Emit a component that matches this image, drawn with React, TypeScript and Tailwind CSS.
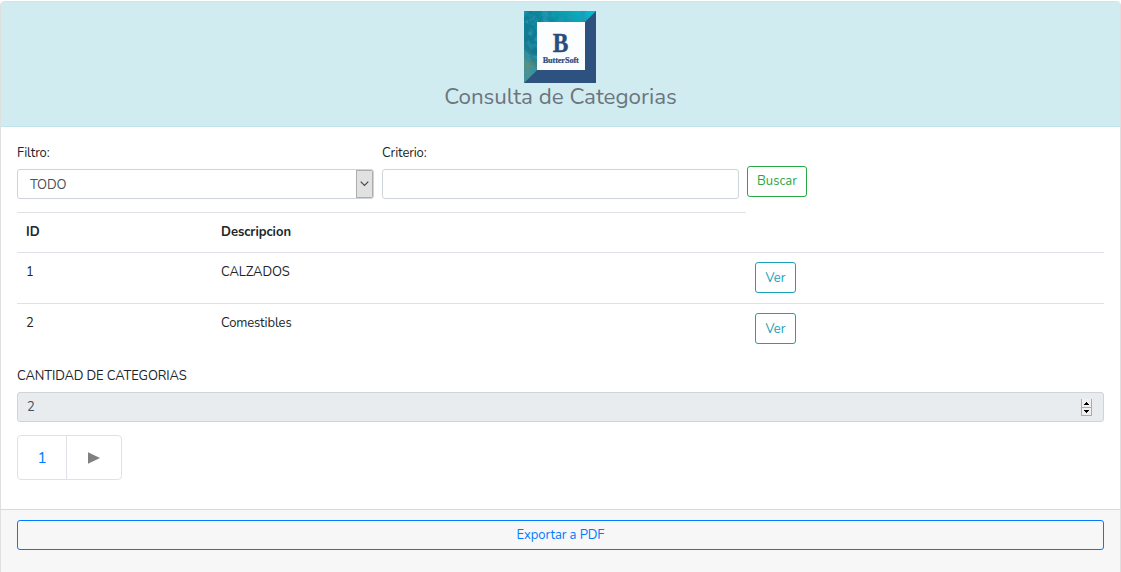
import React from "react";

const categories = [
  { id: 1, name: "CALZADOS" },
  { id: 2, name: "Comestibles" },
];

function Logo() {
  return (
    <svg width="72" height="72" viewBox="0 0 72 72" className="mr-px block">
      <defs>
        <linearGradient id="teal" x1="0" y1="1" x2="1" y2="0">
          <stop offset="0" stopColor="#5f8f83" />
          <stop offset="0.16" stopColor="#5a8f80" />
          <stop offset="0.28" stopColor="#14768c" />
          <stop offset="0.55" stopColor="#0a8298" />
          <stop offset="0.8" stopColor="#06a6b6" />
          <stop offset="1" stopColor="#00c0d6" />
        </linearGradient>
        <filter id="grain" x="0" y="0" width="1" height="1">
          <feTurbulence type="fractalNoise" baseFrequency="0.16" numOctaves="3" seed="4" />
          <feColorMatrix values="0 0 0 0 0.02  0 0 0 0 0.3  0 0 0 0 0.45  2.6 0 0 0 -1.05" />
          <feComposite in2="SourceGraphic" operator="in" />
        </filter>
      </defs>
      <rect width="72" height="72" fill="#2d5280" />
      <path d="M0 0H72L0 72Z" fill="url(#teal)" />
      <path d="M0 0H72L0 72Z" filter="url(#grain)" />
      <rect x="13" y="11" width="48" height="48" fill="#fcfdff" />
      <text x="36.5" y="41" textAnchor="middle" fontFamily="Liberation Serif, serif" fontWeight="700" fontSize="28" textLength="15.5" lengthAdjust="spacingAndGlyphs" fill="#2a4d7c" stroke="#2a4d7c" strokeWidth="0.4">B</text>
      <text x="36.7" y="51.5" textAnchor="middle" fontFamily="Liberation Serif, serif" fontWeight="700" fontSize="8" textLength="36" lengthAdjust="spacingAndGlyphs" fill="#2a4d7c" stroke="#2a4d7c" strokeWidth="0.2">ButterSoft</text>
    </svg>
  );
}

export default function App() {
  return (
    <div className="h-[572px] overflow-hidden bg-white pt-px font-['Nunito','Lato',sans-serif] text-[13px] leading-5 tracking-[-0.13px] text-[#212529]">
      <div className="flex h-[580px] flex-col rounded border border-[#dfdfdf]">
        <header className="flex h-[125px] shrink-0 flex-col items-center rounded-t-[3px] border-b border-[#bee5eb] bg-[#d1ecf1] pt-[9px]">
          <Logo />
          <h1 className="text-[22.4px] leading-[27px] tracking-[-0.02px] whitespace-nowrap text-[#6c757d]">Consulta de Categorias</h1>
        </header>

        <main className="flex h-[382px] shrink-0 flex-col px-4">
          <div className="flex h-[85px] gap-2">
            <label className="w-[357px] pt-4">
              <span className="block h-[26px]">Filtro:</span>
              <span className="flex h-[30px] items-center justify-between overflow-hidden rounded-[3px] border border-[#ced4da] pl-3 text-[#495057]">
                <span className="pt-[2px]">TODO</span>
                <span className="flex h-7 w-[17px] items-center justify-center border border-[#adadad] bg-[#e1e1e1] pr-px">
                  <svg width="9" height="6" viewBox="0 0 9 6" fill="none" stroke="#484848" strokeWidth="1.2"><path d="M.7.7 4.5 4.5 8.3.7" /></svg>
                </span>
              </span>
            </label>
            <label className="w-[357px] pt-4">
              <span className="block h-[26px]">Criterio:</span>
              <input className="block h-[30px] w-full rounded-[3px] border border-[#ced4da] bg-white px-2 outline-none" />
            </label>
            <button className="mt-[39px] h-[31px] w-[60px] rounded-[3px] border border-[#28a745] pb-px tracking-normal text-[#28a745]">Buscar</button>
          </div>

          <div>
            <div className="flex h-10 w-[729px] border-t border-[#dee2e6] pt-[9px] pl-[9px] font-bold tracking-[-0.02px]">
              <span className="w-[195px]">ID</span>
              <span>Descripcion</span>
            </div>
            {categories.map((c) => (
              <div key={c.id} className="flex h-[51px] border-t border-[#dee2e6] pt-[9px] pl-[9px]">
                <span className="w-[195px]">{c.id}</span>
                <span className="w-[534px]">{c.name}</span>
                <button className="h-[31px] w-[41px] rounded-[3px] border border-[#17a2b8] tracking-normal text-[#17a2b8]">Ver</button>
              </div>
            ))}
          </div>

          <div className="pt-3">
            <div className="h-[26px]">CANTIDAD DE CATEGORIAS</div>
            <div className="flex h-[30px] items-center justify-between rounded-[3px] border border-[#ced4da] bg-[#e9ecef] pr-[11px] pl-[9px] text-[#495057]">
              <span>2</span>
              <svg width="11" height="17" viewBox="0 0 11 17" shapeRendering="crispEdges">
                <path d="M0 0h11v17H0z" fill="#f0f0f0" />
                <path d="M0 0h1v17H0zM10 0h1v17h-1zM0 8h11v1H0zM0 16h11v1H0z" fill="#acacac" />
                <path d="M5 3h1v1H5zM4 4h3v1H4zM3 5h5v1H3zM3 11h5v1H3zM4 12h3v1H4zM5 13h1v1H5z" fill="#000" />
              </svg>
            </div>
          </div>

          <nav className="mt-[13px] flex h-[45px] w-[105px] rounded border border-[#dee2e6] text-[16px]">
            <a className="flex w-[49px] items-center justify-center border-r border-[#dee2e6] text-[#007bff]">1</a>
            <span className="flex flex-1 items-center justify-center text-[#808080]">
              <svg width="12" height="12" viewBox="0 0 12 12" fill="currentColor"><path d="M0 .3v11.4L12 6z" /></svg>
            </span>
          </nav>
        </main>

        <footer className="flex-1 border-t border-[#d9d9d9] bg-[#f7f7f7] px-4 pt-[10px]">
          <button className="block h-[30px] w-full rounded-[3px] border border-[#007bff] pb-px tracking-[-0.08px] text-[#007bff]">Exportar a PDF</button>
        </footer>
      </div>
    </div>
  );
}
